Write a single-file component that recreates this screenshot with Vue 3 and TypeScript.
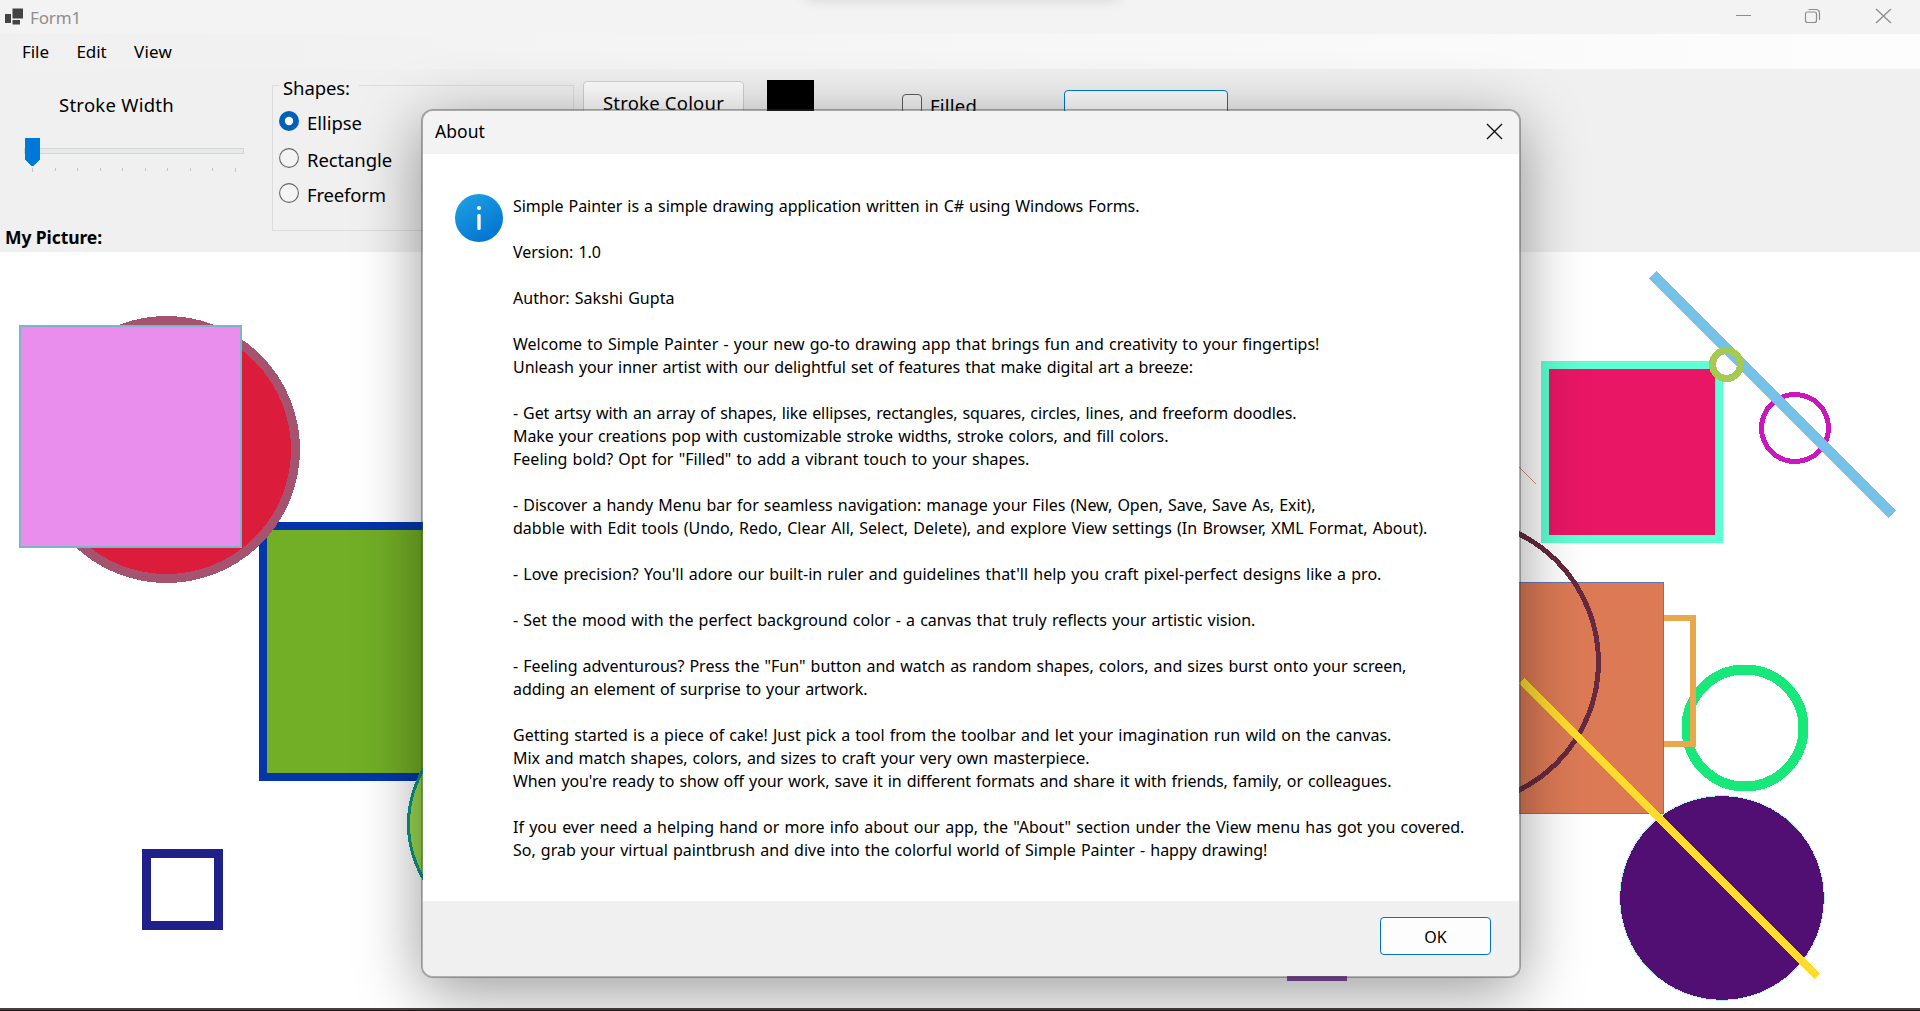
<script setup lang="ts">
import type { Directive } from 'vue'

interface AboutLine {
  text: string
  width?: number
}

const menus = [
  { label: 'File', width: 27 },
  { label: 'Edit', width: 30 },
  { label: 'View', width: 38 },
]

const shapes = [
  { label: 'Ellipse', width: 55, checked: true },
  { label: 'Rectangle', width: 85, checked: false },
  { label: 'Freeform', width: 79, checked: false },
]

const ticks = [8, 31, 53, 76, 98, 121, 143, 166, 188, 211]

const lines: AboutLine[] = [
  { text: 'Simple Painter is a simple drawing application written in C# using Windows Forms.', width: 626.5 },
  { text: '' },
  { text: 'Version: 1.0', width: 88 },
  { text: '' },
  { text: 'Author: Sakshi Gupta', width: 161.5 },
  { text: '' },
  { text: 'Welcome to Simple Painter - your new go-to drawing app that brings fun and creativity to your fingertips!', width: 806.5 },
  { text: 'Unleash your inner artist with our delightful set of features that make digital art a breeze:', width: 680 },
  { text: '' },
  { text: '- Get artsy with an array of shapes, like ellipses, rectangles, squares, circles, lines, and freeform doodles.', width: 783.5 },
  { text: 'Make your creations pop with customizable stroke widths, stroke colors, and fill colors.', width: 655.5 },
  { text: 'Feeling bold? Opt for "Filled" to add a vibrant touch to your shapes.', width: 516.5 },
  { text: '' },
  { text: '- Discover a handy Menu bar for seamless navigation: manage your Files (New, Open, Save, Save As, Exit),', width: 802.5 },
  { text: 'dabble with Edit tools (Undo, Redo, Clear All, Select, Delete), and explore View settings (In Browser, XML Format, About).', width: 914.5 },
  { text: '' },
  { text: "- Love precision? You'll adore our built-in ruler and guidelines that'll help you craft pixel-perfect designs like a pro.", width: 868.5 },
  { text: '' },
  { text: '- Set the mood with the perfect background color - a canvas that truly reflects your artistic vision.', width: 742.5 },
  { text: '' },
  { text: '- Feeling adventurous? Press the "Fun" button and watch as random shapes, colors, and sizes burst onto your screen,', width: 893.5 },
  { text: 'adding an element of surprise to your artwork.', width: 354.5 },
  { text: '' },
  { text: 'Getting started is a piece of cake! Just pick a tool from the toolbar and let your imagination run wild on the canvas.', width: 878.5 },
  { text: 'Mix and match shapes, colors, and sizes to craft your very own masterpiece.', width: 576.5 },
  { text: "When you're ready to show off your work, save it in different formats and share it with friends, family, or colleagues.", width: 878.5 },
  { text: '' },
  { text: 'If you ever need a helping hand or more info about our app, the "About" section under the View menu has got you covered.', width: 951.5 },
  { text: 'So, grab your virtual paintbrush and dive into the colorful world of Simple Painter - happy drawing!', width: 754.5 },
]

// Tracks a label so that it occupies the given width.
const vFit: Directive<HTMLElement, number | undefined> = {
  mounted(el, { value }) {
    const count = (el.textContent ?? '').trim().length
    if (!value || !count) return
    el.style.letterSpacing = '0.001px'
    const natural = el.getBoundingClientRect().width
    el.style.letterSpacing = `${(value - natural) / count}px`
  },
}
</script>

<template>
  <div class="window">
    <header class="titlebar">
      <svg class="app-icon" width="20" height="18" viewBox="0 0 20 18">
        <g fill="#434343">
          <rect x="8.5" y="0.5" width="10.5" height="10" />
          <rect x="1" y="6" width="6" height="9" />
          <rect x="8.5" y="12" width="7.5" height="4.5" />
        </g>
      </svg>
      <span v-fit="51" class="caption">Form1</span>
      <svg class="controls" width="160" height="20" viewBox="0 0 160 20" fill="none" stroke="#8c8c8c">
        <path d="M1 9.5h15" />
        <rect x="70.5" y="6" width="11" height="10.5" rx="2" stroke-width="1.2" />
        <path d="M73.5 3.5h7.5a3.5 3.5 0 0 1 3.5 3.5v7" stroke-width="1.2" />
        <path d="M141 3l15 14M156 3l-15 14" stroke-width="1.3" />
      </svg>
    </header>

    <nav class="menubar">
      <span v-for="m in menus" :key="m.label" v-fit="m.width" class="menu">{{ m.label }}</span>
    </nav>

    <section class="toolbar">
      <div class="stroke-panel">
        <span v-fit="115" class="label stroke-label">Stroke Width</span>
        <svg class="slider" width="220" height="34" viewBox="0 0 220 34" shape-rendering="crispEdges">
          <rect x="0.5" y="10.5" width="219" height="5" fill="#e7eaea" stroke="#d5d5d5" />
          <path d="M1 0h15v21l-6 7h-3l-6-7z" fill="#0078d7" />
          <rect v-for="(t, i) in ticks" :key="t" :x="t" y="30" width="1" :height="i === 0 || i === 9 ? 4 : 3" fill="#c4c4c4" />
        </svg>
        <strong v-fit="97" class="picture-label">My Picture:</strong>
      </div>

      <div class="group">
        <div class="legend"><span v-fit="67" class="label">Shapes:</span></div>
        <div v-for="s in shapes" :key="s.label" class="option">
          <svg width="20" height="20" viewBox="0 0 20 20">
            <template v-if="s.checked">
              <circle cx="10" cy="10" r="10" fill="#005fb8" />
              <circle cx="10" cy="10" r="4.2" fill="#fff" />
            </template>
            <circle v-else cx="10" cy="10" r="9.4" fill="#f4f4f4" stroke="#666" stroke-width="1.1" />
          </svg>
          <span v-fit="s.width" class="label">{{ s.label }}</span>
        </div>
      </div>

      <div class="button"><span v-fit="121" class="label">Stroke Colour</span></div>
      <div class="swatch"></div>
      <div class="check">
        <span class="box"></span>
        <span v-fit="47" class="label">Filled</span>
      </div>
      <div class="button focused"></div>
    </section>

    <main class="canvas">
      <svg width="1920" height="756" viewBox="0 252 1920 756" shape-rendering="crispEdges" fill="none">
        <rect x="263" y="526" width="251" height="251" fill="#72ae26" stroke="#0436aa" stroke-width="8" />
        <circle cx="166.5" cy="449.5" r="129" fill="#dc1c3b" stroke="#a6536f" stroke-width="9" />
        <rect x="20" y="326" width="221" height="221" fill="#ea8eed" stroke="#7db3cb" stroke-width="2" />
        <circle cx="516.5" cy="824" r="108" fill="#99d850" stroke="#0a9488" stroke-width="3" />
        <rect x="146.5" y="853.5" width="72" height="72" stroke="#20208a" stroke-width="9" />
        <rect x="1290" y="924" width="54" height="54" stroke="#8450a6" stroke-width="6" />
        <path d="M1480 428l56 56" stroke="#dc8c8c" stroke-width="1" />
        <circle cx="1795" cy="428" r="33.5" stroke="#cc17be" stroke-width="5" />
        <rect x="1545" y="365" width="174" height="174" fill="#e91665" stroke="#5effd2" stroke-width="8" />
        <path d="M1653 275L1892.5 514.5" stroke="#76c1e8" stroke-width="10" />
        <circle cx="1726.5" cy="364.5" r="14" fill="#fff" stroke="none" />
        <path d="M1724 346L1745 367" stroke="#76c1e8" stroke-width="10" />
        <circle cx="1726.5" cy="364.5" r="14" stroke="#a5ca53" stroke-width="7" />
        <circle cx="1745" cy="728" r="58.5" stroke="#17e879" stroke-width="10" />
        <rect x="1565" y="618" width="128" height="126" stroke="#e8a84e" stroke-width="6" />
        <rect x="1432.5" y="582.5" width="231" height="231" fill="#dc7a55" stroke="#6675b0" />
        <circle cx="1455.5" cy="662" r="143" stroke="#66293f" stroke-width="5" />
        <circle cx="1722" cy="898" r="102.3" fill="#520f73" stroke="#b4f1df" stroke-width="1" />
        <path d="M1521.7 680.7L1817.3 976.3" stroke="#ffdb30" stroke-width="8" />
      </svg>
    </main>
    <footer class="taskbar"></footer>

    <div class="top-shade"></div>

    <div class="dialog">
      <header class="dialog-title">
        <span v-fit="50">About</span>
        <svg width="17" height="17" viewBox="0 0 17 17" fill="none" stroke="#111" stroke-width="1.4">
          <path d="M1 1l15 15M16 1L1 16" />
        </svg>
      </header>
      <div class="dialog-body">
        <svg class="info" width="48" height="48" viewBox="0 0 48 48">
          <defs>
            <linearGradient id="info-fill" x1="0.2" y1="0" x2="0.8" y2="1">
              <stop offset="0" stop-color="#1f9fe3" />
              <stop offset="1" stop-color="#0072d0" />
            </linearGradient>
          </defs>
          <circle cx="24" cy="24" r="24" fill="url(#info-fill)" />
          <circle cx="24" cy="14" r="2.1" fill="#fff" />
          <rect x="22.3" y="20" width="3.4" height="16" rx="1.5" fill="#fff" />
        </svg>
        <div class="message">
          <div v-for="(l, i) in lines" :key="i" class="line"><span v-fit="l.width">{{ l.text }}</span></div>
        </div>
      </div>
      <footer class="dialog-footer">
        <button class="ok" type="button">OK</button>
      </footer>
    </div>
  </div>
</template>

<style>
body {
  margin: 0;
  overflow: hidden;
}
</style>

<style scoped>
.window {
  position: relative;
  width: 1920px;
  height: 1011px;
  overflow: hidden;
  display: flex;
  flex-direction: column;
  font-family: "Noto Sans", "Open Sans", sans-serif;
  color: #000;
  background: #f0f0f0;
}

.window span,
.window strong {
  display: inline-block;
  white-space: pre;
}

.titlebar {
  flex: none;
  height: 34px;
  display: flex;
  align-items: flex-start;
  padding-left: 4px;
  background: #f3f3f3;
}

.app-icon {
  margin-top: 8px;
}

.caption {
  margin: 5px 0 0 6px;
  font-size: 17px;
  line-height: 25px;
  color: #8e8e8e;
}

.controls {
  margin: 6px 25px 0 auto;
  width: 160px;
}

.menubar {
  flex: none;
  height: 35px;
  display: flex;
  gap: 27.5px;
  padding-left: 22px;
  background: linear-gradient(90deg, #f0f0f0, #f2f2f2 20%, #fdfdfd);
}

.menu {
  margin-top: 5px;
  font-size: 17px;
  line-height: 26px;
}

.toolbar {
  flex: none;
  height: 183px;
  display: flex;
  align-items: flex-start;
}

.label {
  font-size: 18.5px;
  line-height: 24px;
}

.stroke-panel {
  width: 272px;
  display: flex;
  flex-direction: column;
  align-items: flex-start;
}

.stroke-label {
  margin: 24px 0 0 59px;
}

.slider {
  margin: 21px 0 0 24px;
}

.picture-label {
  margin: 52px 0 0 5px;
  font-size: 17.5px;
  line-height: 26px;
}

.group {
  box-sizing: border-box;
  width: 302px;
  height: 146px;
  margin-top: 16px;
  margin-right: 1px;
  padding-left: 6px;
  border: 1px solid #dcdcdc;
  display: flex;
  flex-direction: column;
  align-items: flex-start;
}

.legend {
  box-sizing: border-box;
  width: 80px;
  height: 24px;
  margin: -10px 0 11px;
  padding-left: 4px;
  background: #f0f0f0;
}

.option {
  display: flex;
  align-items: flex-start;
  gap: 8px;
  height: 24px;
  margin-bottom: 13px;
}

.option + .option {
  margin-bottom: 11px;
}

.button {
  box-sizing: border-box;
  width: 161px;
  height: 44px;
  margin: 12px 0 0 8px;
  padding-top: 9px;
  border: 1px solid #d0d0d0;
  border-radius: 4px;
  background: #fdfdfd;
  text-align: center;
}

.button.focused {
  width: 164px;
  margin: 21px 0 0 87px;
  border: 1px solid #0078d4;
}

.swatch {
  width: 47px;
  height: 40px;
  margin: 11px 0 0 23px;
  background: #000;
}

.check {
  display: flex;
  align-items: flex-start;
  margin: 25px 0 0 88px;
  gap: 8px;
}

.box {
  box-sizing: border-box;
  width: 20px;
  height: 20px;
  border: 1px solid #5c5c5c;
  border-radius: 4px;
  background: #f4f4f4;
}

.canvas {
  flex: none;
  height: 756px;
  background: #fff;
}

.canvas svg {
  display: block;
}

.taskbar {
  flex: none;
  height: 3px;
  background: linear-gradient(#454143 0 66%, #231a1c 66%);
}

.top-shade {
  position: absolute;
  left: 804px;
  top: -20px;
  width: 316px;
  height: 18px;
  border-radius: 8px;
  box-shadow: 0 2px 14px rgba(0, 0, 0, 0.13);
}

.dialog {
  position: absolute;
  left: 421px;
  top: 109px;
  width: 1096px;
  height: 865px;
  border: 2px solid rgba(60, 60, 60, 0.4);
  border-radius: 12px;
  background: #fff;
  background-clip: padding-box;
  box-shadow: 0 14px 64px rgba(0, 0, 0, 0.4);
  display: flex;
  flex-direction: column;
}

.dialog-title {
  height: 43px;
  flex: none;
  display: flex;
  justify-content: space-between;
  align-items: flex-start;
  padding: 0 16px 0 12px;
  border-radius: 10px 10px 0 0;
  background: #f3f3f3;
  font-size: 17.5px;
  line-height: 26px;
}

.dialog-title span {
  margin-top: 7px;
}

.dialog-title svg {
  margin-top: 12px;
}

.dialog-body {
  flex: 1;
  display: flex;
  align-items: flex-start;
  gap: 10px;
  padding: 40px 0 0 32px;
}

.message {
  padding-top: 1px;
  font-size: 16px;
  line-height: 23px;
  word-spacing: 1px;
}

.line {
  height: 23px;
}

.dialog-footer {
  flex: none;
  height: 75px;
  display: flex;
  justify-content: flex-end;
  align-items: flex-start;
  border-radius: 0 0 10px 10px;
  background: #f0f0f0;
}

.ok {
  box-sizing: border-box;
  width: 111px;
  height: 38px;
  margin: 16px 28px 0 0;
  padding: 1px 0 0;
  border: 1px solid #0070c8;
  border-radius: 4px;
  background: #fdfdfd;
  font: 16px "Noto Sans", "Open Sans", sans-serif;
  color: #000;
}
</style>
